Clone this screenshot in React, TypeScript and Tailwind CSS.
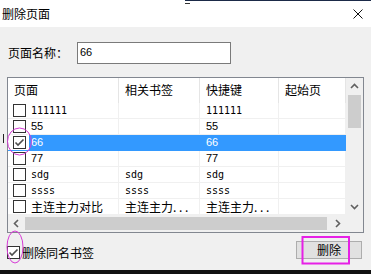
import React from "react";

const cjk = "font-['Noto_Sans_CJK_SC',sans-serif]";
const mono = "font-['DejaVu_Sans_Mono',monospace] text-[10px]";
const sans = "font-['Liberation_Sans',sans-serif] text-[11px]";

const cols = [
  { title: "页面", w: "w-[111px]" },
  { title: "相关书签", w: "w-[81px]" },
  { title: "快捷键", w: "w-[79px]" },
  { title: "起始页", w: "w-[67px]" },
];

const rows = [
  { cells: ["111111", "", "111111", ""] },
  { cells: ["55", "", "55", ""] },
  { cells: ["66", "", "66", ""], selected: true, checked: true },
  { cells: ["77", "", "77", ""] },
  { cells: ["sdg", "sdg", "sdg", ""] },
  { cells: ["ssss", "ssss", "ssss", ""] },
  { cells: ["主连主力对比", "主连主力. . .", "主连主力. . .", ""] },
];

const fontFor = (t: string) => {
  if (/^\d{2}$/.test(t)) return sans;
  if (/^[\x20-\x7e]+$/.test(t)) return mono;
  return `${cjk} text-[12px]`;
};

const Checkbox = ({ checked }: { checked?: boolean }) => (
  <div className="w-[13px] h-[13px] border border-[#333333] bg-white flex items-center justify-center shrink-0">
    {checked && (
      <svg width="11" height="11" viewBox="0 0 11 11">
        <path d="M1.5 5.5 L4 8 L9.5 2.5" fill="none" stroke="#4d4d4d" strokeWidth="1.6" />
      </svg>
    )}
  </div>
);

const Arrow = ({ d }: { d: string }) => (
  <div className="w-[17px] h-[17px] flex items-center justify-center shrink-0">
    <svg width="17" height="17" viewBox="0 0 17 17">
      <path d={d} fill="none" stroke="#606060" strokeWidth="1.6" />
    </svg>
  </div>
);

export default function App() {
  return (
    <div className="w-[371px] h-[274px] relative overflow-hidden bg-[#f0f0f0] flex flex-col text-black">
      <div className="h-px flex shrink-0">
        <div className="w-[185px] bg-white" />
        <div className="flex-1 bg-[#1b2a48]" />
      </div>
      <div className="h-[26px] bg-white flex items-center justify-between pl-[2px] pr-[8px] shrink-0 relative">
        <span className={`${cjk} text-[12px] leading-none`}>删除页面</span>
        <div className="absolute left-[185px] top-[2px] w-[5px] h-px bg-[#333]" />
        <svg width="10" height="10" viewBox="0 0 10 10">
          <path d="M0.5 0.5 L9.5 9.5 M9.5 0.5 L0.5 9.5" stroke="#111" strokeWidth="1" />
        </svg>
      </div>

      <div className="flex-1 flex flex-col">
        <div className="mt-[15px] flex items-center h-[22px]">
          <span className={`${cjk} text-[12px] leading-none pl-[8px] w-[77px]`}>页面名称：</span>
          <div className={`w-[154px] h-[22px] border border-[#7a7a7a] bg-white pl-[2px] pt-[2px] ${sans} leading-[14px]`}>
            66
          </div>
        </div>

        <div className="mt-[13px] ml-[7px] w-[357px] h-[156px] border border-[#828790] bg-white flex flex-col">
          <div className="flex flex-1">
            <div className="w-[338px] flex flex-col">
              <div className="h-[25px] flex">
                {cols.map((c) => (
                  <div key={c.title} className={`${c.w} flex items-center px-[6px] border-r border-[#e5e5e5] ${cjk} text-[12px] leading-none pb-[1px]`}>
                    {c.title}
                  </div>
                ))}
              </div>
              {rows.map((r, i) => (
                <div key={i} className="h-[16px] flex">
                  {r.cells.map((t, j) =>
                    j === 0 ? (
                      <div key={j} className={`${cols[0].w} flex items-center border-r border-b ${r.selected ? "border-[#3399ff]" : "border-[#f0f0f0]"}`}>
                        <div className="ml-[5px]">
                          <Checkbox checked={r.checked} />
                        </div>
                        <div className={`ml-[3px] flex-1 h-full flex items-center pl-[2px] ${r.selected ? "bg-[#3399ff] text-white" : ""}`}>
                          <span className={`${fontFor(t)} leading-none whitespace-nowrap`}>{t}</span>
                        </div>
                      </div>
                    ) : (
                      <div key={j} className={`${cols[j].w} flex items-center px-[6px] border-r border-b ${r.selected ? "bg-[#3399ff] text-white border-[#3399ff]" : "border-[#f0f0f0]"}`}>
                        <span className={`${fontFor(t)} leading-none whitespace-nowrap`}>{t}</span>
                      </div>
                    )
                  )}
                </div>
              ))}
            </div>
            <div className="w-[17px] bg-[#f0f0f0] flex flex-col">
              <Arrow d="M5 10 L8.5 6.5 L12 10" />
              <div className="h-[33px] mx-[2px] bg-[#cdcdcd]" />
              <div className="flex-1" />
              <Arrow d="M5 7 L8.5 10.5 L12 7" />
            </div>
          </div>
          <div className="h-[17px] flex shrink-0">
            <div className="w-[338px] flex bg-[#f0f0f0]">
              <Arrow d="M10 5 L6.5 8.5 L10 12" />
              <div className="flex-1 my-[2px] mr-[2px] bg-[#cdcdcd]" />
              <Arrow d="M7 5 L10.5 8.5 L7 12" />
            </div>
            <div className="w-[17px] bg-[#f0f0f0]" />
          </div>
        </div>

        <div className="mt-[8px] h-[18px] flex items-end">
          <div className="ml-[7px]">
            <Checkbox checked />
          </div>
          <span className={`${cjk} text-[12px] leading-[13px] ml-[2px]`}>删除同名书签</span>
          <div className={`ml-auto mr-[9px] w-[66px] h-[18px] bg-[#e1e1e1] border border-[#adadad] flex items-center justify-center ${cjk} text-[12px] leading-none`}>
            删除
          </div>
        </div>
      </div>

      <div className="h-[4px] bg-[#111111] shrink-0" />

      <div className="absolute left-[3px] top-[134px] w-px h-[9px] bg-[#222]" />
      <svg className="absolute inset-0 pointer-events-none" width="371" height="274" viewBox="0 0 371 274">
        <ellipse cx="19.5" cy="141.5" rx="12" ry="13.5" fill="none" stroke="#d63ad6" strokeWidth="1" />
        <ellipse cx="15" cy="247" rx="8" ry="16" fill="none" stroke="#d63ad6" strokeWidth="1" />
        <rect x="302.5" y="237" width="46.5" height="26.5" fill="none" stroke="#e620e6" strokeWidth="2" />
      </svg>
    </div>
  );
}
